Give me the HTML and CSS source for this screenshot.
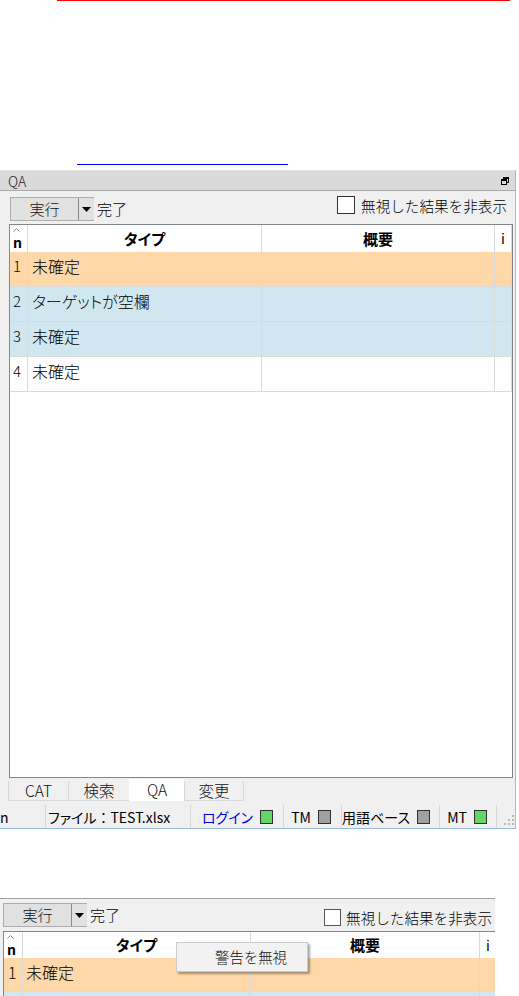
FILE: index.html
```html
<!DOCTYPE html>
<html lang="ja">
<head>
<meta charset="utf-8">
<title>QA</title>
<link rel="stylesheet" href="styles.css">
</head>
<body>
<div class="top">
  <div class="redline"></div>
  <div class="blueline"></div>
</div>

<div class="window">
  <div class="titlebar">
    <span class="title">QA</span>
    <svg class="restore" width="8" height="8" viewBox="0 0 8 8">
      <path d="M2.5 0.5h5v5h-1.5" fill="none" stroke="#000" stroke-width="1"/>
      <rect x="0.5" y="2.5" width="5" height="5" fill="none" stroke="#000" stroke-width="1"/>
      <rect x="0" y="2" width="6" height="2" fill="#000"/>
      <rect x="2" y="0" width="6" height="2" fill="#000"/>
    </svg>
  </div>
  <div class="toolbar">
    <div class="runbtn">
      <span class="runlabel">実行</span>
      <span class="dd"><svg width="9" height="5" viewBox="0 0 9 5"><path d="M0 0h9L4.5 5z" fill="#000"/></svg></span>
    </div>
    <span class="donetext">完了</span>
    <label class="hidechk"><span class="checkbox"></span><span class="chklabel">無視した結果を非表示</span></label>
  </div>
  <div class="grid g1">
    <div class="row head">
      <div class="c n"><svg class="caret" width="7" height="4" viewBox="0 0 7 4"><path d="M0.5 3.5L3.5 0.5L6.5 3.5" fill="none" stroke="#888" stroke-width="1"/></svg><span>n</span></div>
      <div class="c type">タイプ</div>
      <div class="c sum">概要</div>
      <div class="c i">i</div>
    </div>
    <div class="row data orange"><div class="c n">1</div><div class="c type">未確定</div><div class="c sum"></div><div class="c i"></div></div>
    <div class="row data blue"><div class="c n">2</div><div class="c type">ターゲットが空欄</div><div class="c sum"></div><div class="c i"></div></div>
    <div class="row data blue"><div class="c n">3</div><div class="c type">未確定</div><div class="c sum"></div><div class="c i"></div></div>
    <div class="row data"><div class="c n">4</div><div class="c type">未確定</div><div class="c sum"></div><div class="c i"></div></div>
  </div>
  <div class="tabs">
    <span class="tab t-cat">CAT</span>
    <span class="tab t-search">検索</span>
    <span class="tab t-qa active">QA</span>
    <span class="tab t-change">変更</span>
  </div>
  <div class="statusbar">
    <div class="seg s-n">n</div>
    <div class="seg s-file">ファイル<span class="colon">：</span>TEST.xlsx</div>
    <div class="seg s-login"><span class="login">ログイン</span><span class="sq green"></span></div>
    <div class="seg s-tm"><span>TM</span><span class="sq gray"></span></div>
    <div class="seg s-tb"><span>用語ベース</span><span class="sq gray"></span></div>
    <div class="seg s-mt"><span>MT</span><span class="sq green"></span></div>
    <div class="seg s-grip">
      <svg width="10" height="10" viewBox="0 0 10 10">
        <rect x="8" y="0" width="2" height="2" fill="#b8b8b8"/>
        <rect x="4" y="4" width="2" height="2" fill="#b8b8b8"/>
        <rect x="8" y="4" width="2" height="2" fill="#b8b8b8"/>
        <rect x="0" y="8" width="2" height="2" fill="#b8b8b8"/>
        <rect x="4" y="8" width="2" height="2" fill="#b8b8b8"/>
        <rect x="8" y="8" width="2" height="2" fill="#b8b8b8"/>
      </svg>
    </div>
  </div>
</div>

<div class="shot2">
  <div class="toolbar t2">
    <div class="runbtn">
      <span class="runlabel">実行</span>
      <span class="dd"><svg width="9" height="5" viewBox="0 0 9 5"><path d="M0 0h9L4.5 5z" fill="#000"/></svg></span>
    </div>
    <span class="donetext">完了</span>
    <label class="hidechk"><span class="checkbox"></span><span class="chklabel">無視した結果を非表示</span></label>
  </div>
  <div class="grid g2">
    <div class="row head">
      <div class="c n"><svg class="caret" width="7" height="4" viewBox="0 0 7 4"><path d="M0.5 3.5L3.5 0.5L6.5 3.5" fill="none" stroke="#888" stroke-width="1"/></svg><span>n</span></div>
      <div class="c type">タイプ</div>
      <div class="c sum">概要</div>
      <div class="c i">i</div>
    </div>
    <div class="row data orange"><div class="c n">1</div><div class="c type">未確定</div><div class="c sum"></div><div class="c i"></div></div>
    <div class="row data blue"><div class="c n"></div><div class="c type"></div><div class="c sum"></div><div class="c i"></div></div>
  </div>
</div>

<div class="ctxmenu">警告を無視</div>
</body>
</html>
```

FILE: styles.css
```css
* { box-sizing: border-box; }

html, body {
  margin: 0;
  padding: 0;
}

body {
  width: 519px;
  height: 996px;
  overflow: hidden;
  position: relative;
  background: #ffffff;
  font-family: "Noto Sans CJK JP", "Noto Sans", sans-serif;
  font-feature-settings: "palt";
  color: #000;
}

.top {
  height: 170px;
}
.redline {
  margin-left: 57px;
  width: 453px;
  height: 1px;
  background: #ff0000;
}
.blueline {
  margin-left: 77px;
  margin-top: 163px;
  width: 211px;
  height: 1px;
  background: #0000ff;
}

.window {
  width: 516px;
  height: 659px;
  background: #f0f0f0;
  border-right: 1px solid #98bde4;
  border-bottom: 1px solid #98bde4;
  display: flex;
  flex-direction: column;
}

.titlebar {
  height: 21px;
  flex: none;
  background: #dadada;
  border-top: 1px solid #e6e6e6;
  border-bottom: 1px solid #a9a9a9;
  display: flex;
  align-items: center;
  justify-content: space-between;
  padding: 0 6px 0 8px;
}
.title {
  font-size: 14px;
  line-height: 16px;
  color: #222;
  font-weight: 300;
}
.restore { display: block; }

.toolbar {
  height: 33px;
  flex: none;
  display: flex;
  align-items: flex-start;
  padding: 6px 0 0 10px;
}
.runbtn {
  width: 84px;
  height: 24px;
  display: flex;
  background: #e1e1e1;
  border: 1px solid #adadad;
  border-right: none;
}
.runlabel {
  width: 67px;
  text-align: center;
  font-size: 15px;
  line-height: 21px;
  color: #111;
  font-weight: 300;
}
.dd {
  flex: 1;
  border-left: 1px solid #8a8a8a;
  display: flex;
  align-items: center;
  justify-content: center;
  padding-top: 1px;
}
.dd svg { display: block; }
.donetext {
  margin-left: 3px;
  font-size: 15px;
  line-height: 23px;
  font-weight: 300;
}
.hidechk {
  margin-left: auto;
  margin-right: 8px;
  margin-top: -3px;
  display: flex;
  align-items: center;
  gap: 6px;
}
.checkbox {
  width: 18px;
  height: 18px;
  border: 1px solid #333;
  background: #fff;
}
.chklabel {
  font-size: 14.6px;
  line-height: 20px;
  margin-top: 2px;
  font-feature-settings: normal;
  font-weight: 300;
}

.grid {
  background: #fff;
  border: 1px solid #828790;
  overflow: hidden;
}
.g1 {
  margin-left: 9px;
  width: 504px;
  height: 554px;
  flex: none;
}
.row {
  display: grid;
}
.g1 .row { grid-template-columns: 18px 234px 233px 17px; }
.g2 .row { grid-template-columns: 19px 228px 229px 40px; }

.c {
  border-right: 1px solid #dadada;
  overflow: hidden;
  white-space: nowrap;
}
.head { height: 27px; background: #fff; }
.head .c {
  font-weight: bold;
  font-size: 15px;
  line-height: 27px;
  text-align: center;
}
.head .n {
  position: relative;
  line-height: 1;
}
.head .n .caret {
  position: absolute;
  left: 3px;
  top: 3px;
}
.head .n span {
  position: absolute;
  left: 3px;
  top: 9px;
  font-size: 14px;
  line-height: 16px;
}
.head .i {
  font-weight: normal;
  font-size: 14px;
  text-align: left;
  padding-left: 6px;
}

.data {
  height: 35px;
  border-bottom: 1px solid #dadada;
}
.data .c {
  font-size: 16px;
  line-height: 28px;
  font-weight: 300;
}
.data .n {
  font-size: 15px;
  padding-left: 3px;
}
.data .type { padding-left: 4px; }
.orange { background: #fed8a8; }
.blue { background: #d1e7f0; }

.tabs {
  height: 24px;
  flex: none;
  display: flex;
  align-items: flex-end;
  padding: 0 0 1px 8px;
}
.tab {
  height: 20px;
  border: 1px solid #d9d9d9;
  border-top: none;
  border-right: none;
  background: #f0f0f0;
  text-align: center;
  font-size: 15.5px;
  line-height: 18px;
  color: #111;
  font-weight: 300;
}
.tab.active {
  height: 22px;
  line-height: 21px;
  background: #fff;
  border-color: #fff;
}
.t-cat { width: 60px; }
.t-search { width: 61px; }
.t-qa { width: 55px; }
.t-change { width: 60px; border-right: 1px solid #d9d9d9; }

.statusbar {
  height: 26px;
  flex: none;
  display: flex;
  align-items: stretch;
  font-size: 14px;
  padding-top: 3px;
}
.seg {
  display: flex;
  align-items: center;
  gap: 7px;
  line-height: 18px;
  white-space: nowrap;
}
.seg + .seg { border-left: 1px solid #d7d7d7; }
.s-n { width: 45px; padding-left: 0; }
.s-file { width: 145px; padding-left: 2px; gap: 0; }
.colon { font-feature-settings: normal; }
.s-login { width: 93px; justify-content: flex-end; padding-right: 10px; }
.s-tm { width: 58px; justify-content: flex-end; padding-right: 10px; }
.s-tb { width: 98px; justify-content: flex-end; padding-right: 9px; }
.s-mt { width: 57px; justify-content: flex-end; padding-right: 9px; }
.s-grip { flex: 1; justify-content: flex-end; align-items: flex-end; padding: 0 1px 3px 0; }
.login { color: #0000e0; }
.sq {
  width: 13px;
  height: 14px;
  border: 1px solid #303030;
  flex: none;
}
.green { background: #63d763; }
.gray { background: #a0a0a0; }

.shot2 {
  margin-top: 69px;
  width: 495px;
  height: 98px;
  background: #f0f0f0;
  border-top: 1px solid #a0a0a0;
  overflow: hidden;
}
.toolbar.t2 {
  height: 32px;
  padding: 4px 0 0 3px;
}
.t2 .hidechk {
  margin-right: 3px;
  margin-top: 3px;
  gap: 5px;
}
.t2 .checkbox {
  width: 17px;
  height: 17px;
  border-color: #555;
}
.g2 {
  margin-left: 3px;
  width: 540px;
  height: 80px;
  border-right: none;
}
.g2 .head { height: 26px; }
.g2 .head .c { line-height: 26px; }
.g2 .data { height: 34px; }
.g2 .data .n { padding-left: 4px; font-size: 16px; }
.g2 .data .type { padding-left: 3px; }

.ctxmenu {
  position: absolute;
  left: 176px;
  top: 942px;
  width: 132px;
  height: 30px;
  background: #f2f2f2;
  border: 1px solid #cccccc;
  box-shadow: 2px 2px 2px rgba(0,0,0,0.35);
  font-size: 14.4px;
  line-height: 28px;
  padding-left: 38px;
  color: #111;
  font-feature-settings: normal;
  font-weight: 300;
}
```
